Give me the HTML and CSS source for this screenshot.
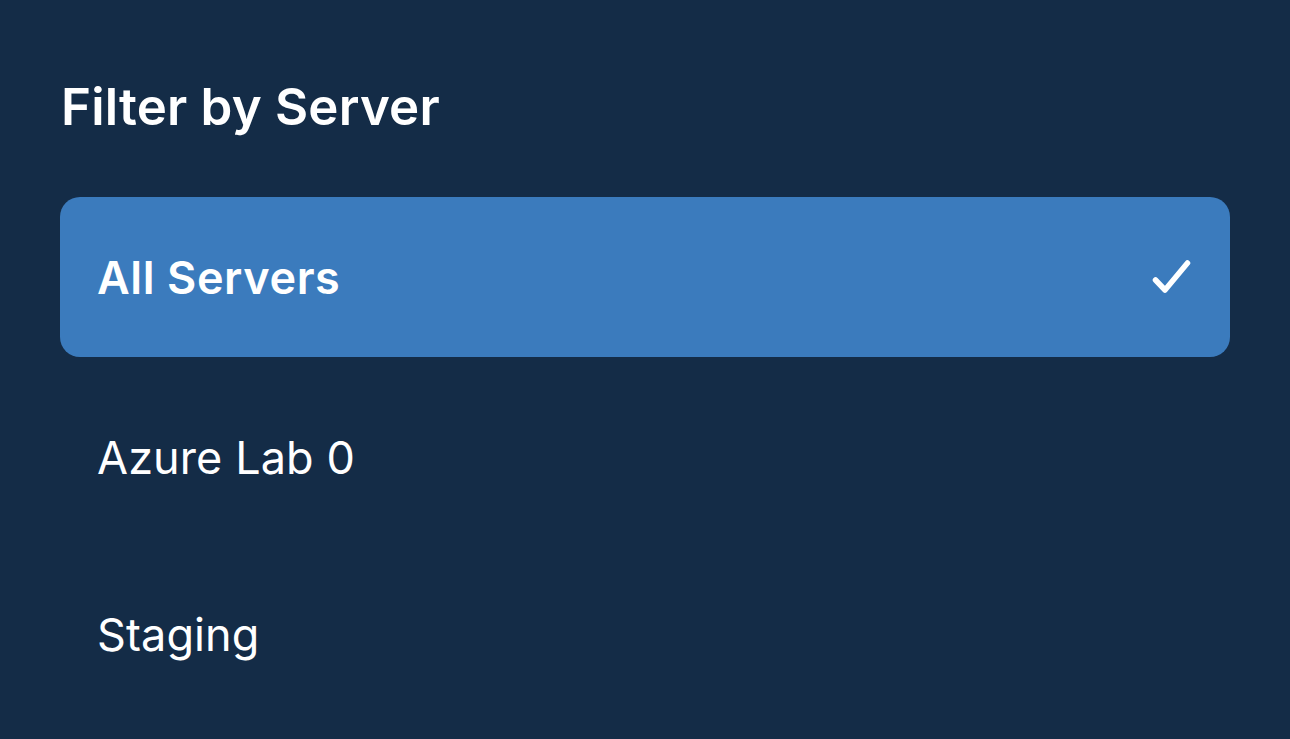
FILE: index.html
```html
<!DOCTYPE html>
<html>
<head>
<meta charset="utf-8">
<link rel="stylesheet" href="styles.css">
</head>
<body>
<main class="sheet">
  <h1 class="title">Filter by Server</h1>
  <ul class="list">
    <li class="row selected">
      <span class="label">All Servers</span>
      <svg class="check" width="40" height="36" viewBox="0 0 40 36"><path d="M3.5 21 L13 31 L35.5 4" fill="none" stroke="#fff" stroke-width="5.5" stroke-linecap="round" stroke-linejoin="round"/></svg>
    </li>
    <li class="row"><span class="label">Azure Lab 0</span></li>
    <li class="row"><span class="label">Staging</span></li>
  </ul>
</main>
</body>
</html>
```
FILE: styles.css
```css
html, body {
  margin: 0;
  padding: 0;
  background: #142c47;
  height: 100%;
}
body {
  font-family: Inter, "Noto Sans", sans-serif;
  color: #ffffff;
  overflow: hidden;
}
.sheet {
  padding: 70px 60px 0 60px;
}
.title {
  margin: 0 0 0 1px;
  font-size: 51px;
  font-weight: 600;
  line-height: 74px;
  letter-spacing: 0.2px;
}
.list {
  list-style: none;
  margin: 53px 0 0 0;
  padding: 0;
  display: flex;
  flex-direction: column;
  gap: 20px;
}
.row {
  height: 160px;
  border-radius: 20px;
  display: flex;
  align-items: center;
  justify-content: space-between;
  padding: 0 38px 0 37px;
}
.row + .row + .row { margin-top: -3px; }
.row.selected {
  background: #3b7bbd;
}
.label {
  font-size: 45px;
  font-weight: 400;
  letter-spacing: 0.1px;
}
.selected .label {
  font-weight: 600;
  letter-spacing: 0.6px;
}
.check {
  display: block;
}
```
